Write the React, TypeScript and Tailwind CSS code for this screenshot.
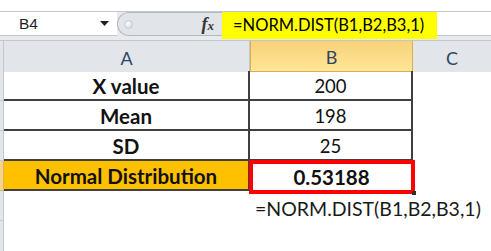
import React from 'react'

const rows = [
  { label: 'X value', value: '200' },
  { label: 'Mean', value: '198' },
  { label: 'SD', value: '25' },
]

const cellFont = { fontFamily: 'Lato, "Open Sans", sans-serif' }

export default function App() {
  return (
    <div className="w-[491px] h-[251px] bg-white overflow-hidden flex flex-col" style={cellFont}>
      <div className="h-[11px] shrink-0 bg-white" />

      {/* Formula bar */}
      <div className="h-[29px] shrink-0 flex border-t border-[#c3c7cd] bg-[#e8eaed]">
        <div className="w-[117px] h-[24px] bg-white border-b border-[#c3c7cd] flex items-center justify-between pl-[19px] pr-[8px]">
          <span className="text-[15.5px] text-[#1f1f1f]" style={{ fontFamily: '"Liberation Sans", Arial, sans-serif' }}>
            B4
          </span>
          <svg width="9" height="5" viewBox="0 0 9 5">
            <path d="M0 0 H9 L4.5 5 Z" fill="#222" />
          </svg>
        </div>
        <div className="w-[105px] h-[24px] flex items-center bg-[#e1e4e8] border border-[#b4b9c0] rounded-l-[12px] border-r-0">
          <span className="ml-[6px] w-[9px] h-[9px] rounded-full bg-[radial-gradient(circle_at_40%_35%,#ffffff,#c9cdd3)] border border-[#c7cbd1]" />
          <span
            className="ml-auto mr-[8px] text-[18px] italic font-bold text-[#333]"
            style={{ fontFamily: '"Liberation Serif", "Times New Roman", serif' }}
          >
            f<span className="text-[13px]">x</span>
          </span>
        </div>
        <div className="w-[215px] h-[27px] bg-[#ffff00] flex items-center pl-[11px] text-[16.5px] text-black">
          =NORM.DIST(B1,B2,B3,1)
        </div>
        <div className="flex-1 h-[24px] bg-white border-b border-[#c3c7cd]" />
      </div>

      {/* Column headers */}
      <div className="h-[31px] shrink-0 grid grid-cols-[4px_246px_163px_78px] border-y border-[#c3c7cd] text-[18px] text-[#2f4662]">
        <div className="bg-[#e2e5e9] border-r border-[#c3c7cd]" />
        <div className="bg-[#e2e5e9] border-r border-[#c3c7cd] flex items-center justify-center pt-[3px]">A</div>
        <div className="bg-linear-to-b from-[#f8d27a] to-[#ffe697] border-x border-b border-[#e2ab4d] flex items-center justify-center pt-[3px]">
          B
        </div>
        <div className="bg-[#e2e5e9] flex items-center justify-center pt-[3px]">C</div>
      </div>

      {/* Data rows */}
      <div className="grid grid-cols-[4px_246px_163px_78px] auto-rows-[30px] text-[18.5px] text-[#111]">
        {rows.map((r) => (
          <React.Fragment key={r.label}>
            <div className="bg-[#e2e5e9] border-r border-b border-[#c3c7cd]" />
            <div className="border-r-2 border-b-2 border-[#404040] flex items-center justify-center pt-[3px] font-bold text-[20.5px]">
              {r.label}
            </div>
            <div className="border-r-2 border-b-2 border-[#404040] flex items-center justify-center pt-[3px]">{r.value}</div>
            <div />
          </React.Fragment>
        ))}

        <div className="bg-[#f6d589] border-r border-b border-[#d9b35d]" />
        <div className="bg-[#ffc000] border-r-2 border-b-2 border-[#404040] flex items-center justify-center pt-[3px] font-bold text-[20.5px]">
          Normal Distribution
        </div>
        <div className="relative flex items-center justify-center pt-[3px] font-bold text-[20.5px]">
          0.53188
          <div className="absolute -left-[1px] -top-[1px] w-[166px] h-[34px] border-[4px] border-[#ff0000]" />
          <div className="absolute left-[162px] top-[30px] w-[4px] h-[4px] bg-[#303030]" />
        </div>
        <div />

        <div className="bg-[#e2e5e9] border-r border-b border-[#c3c7cd]" />
        <div />
        <div className="flex items-center pl-[5px] pt-[6px] whitespace-nowrap overflow-visible text-[19.5px] text-[#1a1a1a]">
          =NORM.DIST(B1,B2,B3,1)
        </div>
        <div />

        <div className="bg-[#e2e5e9] border-r border-[#c3c7cd]" />
        <div />
        <div />
        <div />
      </div>
    </div>
  )
}
